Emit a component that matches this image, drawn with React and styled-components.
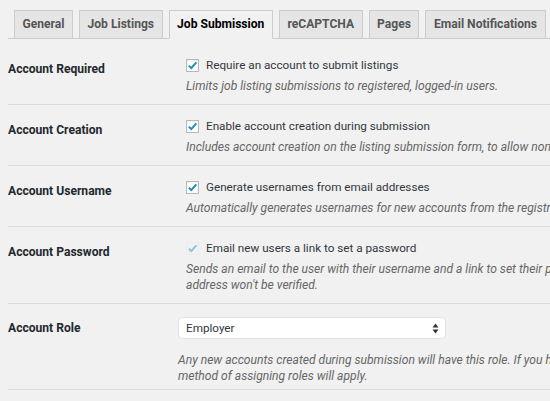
import React from 'react'
import styled, { createGlobalStyle } from 'styled-components'

const GlobalStyle = createGlobalStyle`
  html, body {
    margin: 0;
    padding: 0;
    overflow: hidden;
    background: #f1f1f1;
  }
  body {
    padding: 0 0 0 8px;
    font-family: Roboto, 'Liberation Sans', Arial, sans-serif;
    color: #444;
  }
`

const Wrap = styled.div`
  width: 760px;
  padding-top: 10px;
`

const TabBar = styled.div`
  display: flex;
  gap: 6px;
  padding-left: 6px;
  border-bottom: 1px solid #ccc;
`

const Tab = styled.div`
  flex: none;
  height: 27px;
  line-height: 27px;
  padding: 0 7.5px;
  margin-bottom: -1px;
  border: 1px solid #ccc;
  border-bottom-color: ${(p) => (p.$active ? '#f1f1f1' : '#ccc')};
  background: ${(p) => (p.$active ? '#f1f1f1' : '#e5e5e5')};
  color: ${(p) => (p.$active ? '#000' : '#555')};
  font-size: 12.1px;
  font-weight: 700;
  white-space: nowrap;
`

const Table = styled.div`
  margin-top: 5px;
`

const Row = styled.div`
  display: grid;
  grid-template-columns: 170px 1fr;
  border-bottom: 1px solid #dcdcdc;
  padding: ${(p) => p.$pad || '11px 0 10px'};
`

const Label = styled.div`
  padding-top: ${(p) => p.$pt || '4px'};
  line-height: 20px;
  font-size: 12.1px;
  font-weight: 700;
  color: #23282d;
  white-space: nowrap;
`

const Field = styled.div`
  padding-left: ${(p) => (p.$indent ? '8px' : '0')};
  white-space: nowrap;
`

const CheckLine = styled.label`
  display: flex;
  align-items: center;
  gap: 7px;
  height: 20px;
  font-size: 11.7px;
  color: #32373c;
`

const Box = styled.span`
  flex: none;
  width: 13px;
  height: 13px;
  box-sizing: border-box;
  border: 1px solid ${(p) => (p.$disabled ? '#ececec' : '#b4b9be')};
  background: ${(p) => (p.$disabled ? '#f1f1f1' : '#fff')};
  box-shadow: ${(p) => (p.$disabled ? 'none' : 'inset 0 1px 2px rgba(0,0,0,0.08)')};
  display: flex;
  align-items: center;
  justify-content: center;
`

const Description = styled.p`
  margin: ${(p) => p.$mt || '3px'} 0 0;
  font-size: 12.1px;
  line-height: 16px;
  font-style: italic;
  color: #666;
  span {
    display: block;
  }
`

const Select = styled.div`
  width: 268px;
  height: 22px;
  box-sizing: border-box;
  display: flex;
  align-items: center;
  justify-content: space-between;
  padding: 0 6px 0 7px;
  background: #fff;
  border: 1px solid #e2e2e2;
  border-radius: 4px;
  font-size: 11.7px;
  color: #32373c;
`

function Check({ disabled }) {
  return (
    <Box $disabled={disabled}>
      <svg width="11" height="11" viewBox="0 0 11 11">
        <path
          d="M1.8 5.6 L4.3 8.1 L9.3 2.3"
          fill="none"
          stroke={disabled ? '#8dc0de' : '#1e8cbe'}
          strokeWidth="2"
        />
      </svg>
    </Box>
  )
}

function Arrows() {
  return (
    <svg width="7" height="11" viewBox="0 0 7 11">
      <path d="M0.5 4.5 L3.5 0.5 L6.5 4.5 Z" fill="#333" />
      <path d="M0.5 6.5 L3.5 10.5 L6.5 6.5 Z" fill="#333" />
    </svg>
  )
}

const tabs = [
  'General',
  'Job Listings',
  'Job Submission',
  'reCAPTCHA',
  'Pages',
  'Email Notifications',
  'Job Visibility',
]

const checkRows = [
  {
    label: 'Account Required',
    text: 'Require an account to submit listings',
    desc: ['Limits job listing submissions to registered, logged-in users.'],
  },
  {
    label: 'Account Creation',
    text: 'Enable account creation during submission',
    desc: [
      'Includes account creation on the listing submission form, to allow non-registered users to create an account and submit a job listing simultaneously.',
    ],
  },
  {
    label: 'Account Username',
    text: 'Generate usernames from email addresses',
    desc: [
      "Automatically generates usernames for new accounts from the registrant's email address. If this is not enabled, a \"username\" field will display instead.",
    ],
  },
  {
    label: 'Account Password',
    text: 'Email new users a link to set a password',
    disabled: true,
    desc: [
      'Sends an email to the user with their username and a link to set their password. If this is not enabled, the email',
      "address won't be verified.",
    ],
  },
]

export default function App() {
  return (
    <>
      <GlobalStyle />
      <Wrap>
        <TabBar>
          {tabs.map((t) => (
            <Tab key={t} $active={t === 'Job Submission'}>
              {t}
            </Tab>
          ))}
        </TabBar>
        <Table>
          {checkRows.map((r) => (
            <Row key={r.label}>
              <Label>{r.label}</Label>
              <Field $indent>
                <CheckLine>
                  <Check disabled={r.disabled} />
                  {r.text}
                </CheckLine>
                <Description>
                  {r.desc.map((d) => (
                    <span key={d}>{d}</span>
                  ))}
                </Description>
              </Field>
            </Row>
          ))}
          <Row $pad="13px 0 5px">
            <Label $pt="1px">Account Role</Label>
            <Field>
              <Select>
                Employer
                <Arrows />
              </Select>
              <Description $mt="13px">
                <span>
                  Any new accounts created during submission will have this role. If you haven't enabled account creation
                  during submission in the options above, your own
                </span>
                <span>method of assigning roles will apply.</span>
              </Description>
            </Field>
          </Row>
        </Table>
      </Wrap>
    </>
  )
}
